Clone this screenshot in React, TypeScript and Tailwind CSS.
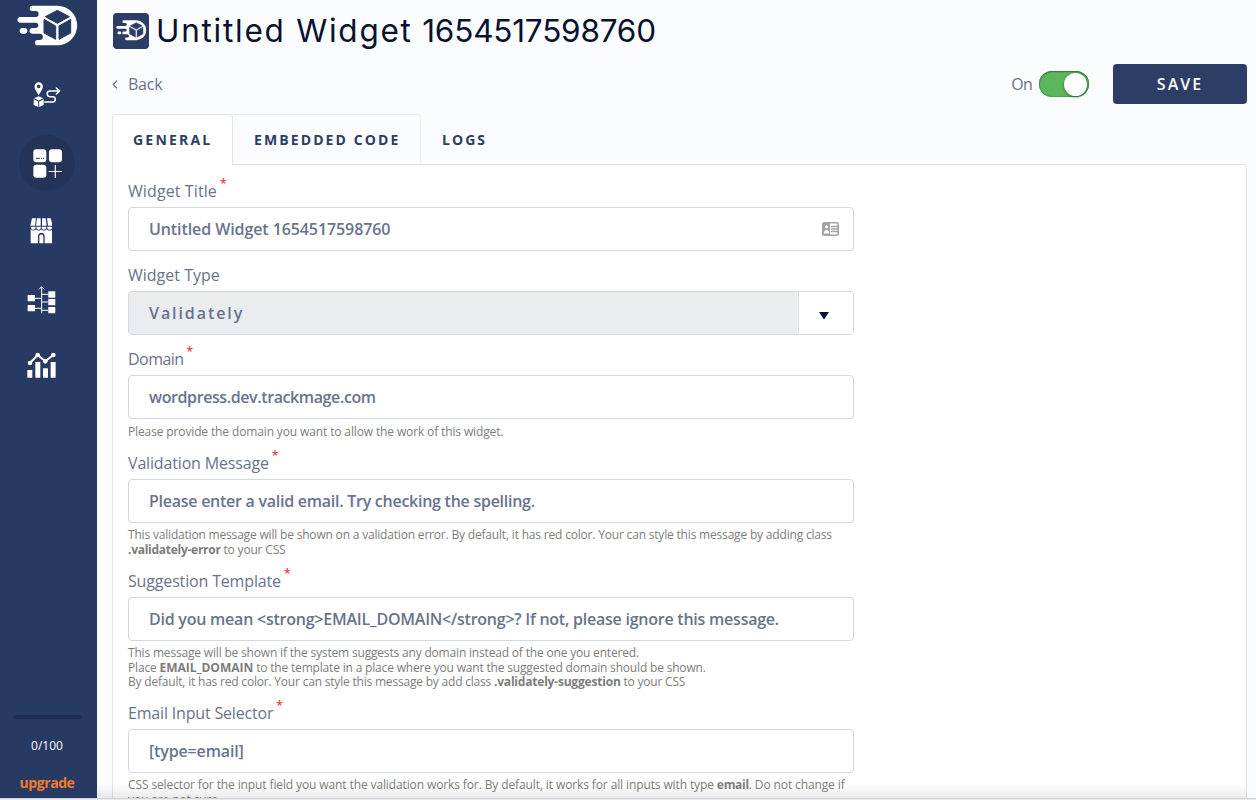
import type { ReactNode } from "react";

function Logo({ className, face }: { className: string; face: string }) {
  return (
    <svg viewBox="20 15 182 123" className={className} fill="#fff">
      <path d="M66 17H141a59.5 59.5 0 0 1 0 119H82a8 8 0 0 1 0-16h6a9.500 9.500 0 0 0 0-19H66a8.500 8.500 0 0 1 0-17h10a8 8 0 0 0 0-16H30a8.500 8.500 0 0 1 0-17h46a9 9 0 0 0 0-18H66a8 8 0 0 1 0-16z" />
      <rect x="28" y="84" width="23" height="17" rx="8.500" />
      <g fill={face} stroke={face} strokeWidth="3" strokeLinejoin="round">
        <path d="M141 31l36 19-36 20-36-20z" />
        <path d="M101 58l35 20v40l-35-19z" />
        <path d="M181 58l-35 20v40l35-19z" />
      </g>
    </svg>
  );
}

function RouteIcon() {
  return (
    <svg viewBox="70 247 84 76" className="h-[25.3px] w-[28px]" fill="#fff">
      <path fillRule="evenodd" d="M87 248c7 0 12.500 5.500 12.500 12.500C99.500 270 92 277 87 287c-5-10-12.500-17-12.500-26.500C74.500 253.500 80 248 87 248zm0 7a5.500 5.500 0 1 0 0 11 5.500 5.500 0 0 0 0-11z" />
      <path d="M87 290l14 6-14 6.500-14-6.500zM72 299l13.500 6.500V322L72 316zM102 299l-13.500 6.500V322L102 316z" />
      <path d="M105 307h24a8 8 0 0 0 0-16h-8a8.500 8.500 0 0 1 0-17h27M140 265l10 9-10 9" fill="none" stroke="#fff" strokeWidth="4.500" strokeLinejoin="round" strokeLinecap="round" />
    </svg>
  );
}

function WidgetsIcon() {
  return (
    <svg viewBox="98 71 88 88" className="ml-px mt-px size-[29.3px]" fill="#fff">
      <rect x="99" y="72" width="39" height="39" rx="9" />
      <rect x="146" y="72" width="39" height="39" rx="9" />
      <rect x="99" y="118" width="39" height="39" rx="9" />
      <path d="M165 120v37M146.500 138.500h37" stroke="#fff" strokeWidth="3.500" strokeLinecap="round" />
      <path d="M107 99h12M122 99h3M128 99h3" stroke="#253358" strokeWidth="3" />
    </svg>
  );
}

function StoreIcon() {
  return (
    <svg viewBox="90 280 68 77" className="h-[25.7px] w-[22.7px]" fill="#fff">
      <path d="M96 281h12l-3 22H91zM111 281h11v22h-14zM126 281h11l3 22h-14zM141 281h11l6 22h-14z" />
      <path d="M92 306h15c0 6-3 9-7 9s-8-3-8-9zM109 306h14c0 6-3 9-7 9s-7-3-7-9zM125 306h14c0 6-3 9-7 9s-7-3-7-9zM141 306h16c0 6-4 9-8 9s-8-3-8-9z" />
      <path d="M92 314c5 5 12 5 16 0 4 5 12 5 16 0 4 5 12 5 16 0 4 5 12 5 17 0v42h-23v-21c0-14-20-14-20 0v21H92z" />
      <path d="M118 356v-20c0-9 12-9 12 0v20z" />
    </svg>
  );
}

function TreeIcon() {
  return (
    <svg viewBox="80 61 88 84" className="ml-[2px] mt-px h-[28px] w-[29.3px]" fill="#fff">
      <path d="M124 143V64M116 71l8-8 8 8M103 98h21M103 128h21M124 86h20M124 109h20M124 134h20" fill="none" stroke="#fff" strokeWidth="3" />
      <rect x="82" y="88" width="22" height="19" rx="1" />
      <rect x="82" y="118" width="22" height="19" rx="1" />
      <rect x="144" y="77" width="21" height="19" rx="1" />
      <rect x="144" y="100" width="21" height="19" rx="1" />
      <rect x="144" y="124" width="21" height="19" rx="1" />
    </svg>
  );
}

function ChartIcon() {
  return (
    <svg viewBox="80 262 88 79" className="mb-[3px] ml-[1px] h-[26.3px] w-[29.3px]" fill="#fff">
      <path d="M89 295l23-24 23 19 24-19" fill="none" stroke="#fff" strokeWidth="6" />
      <circle cx="89" cy="295" r="7" />
      <circle cx="112" cy="271" r="7" />
      <circle cx="135" cy="290" r="7" />
      <circle cx="159" cy="271" r="7" />
      <rect x="81" y="316" width="15" height="23" rx="1" />
      <rect x="105" y="292" width="15" height="47" rx="1" />
      <rect x="128" y="311" width="15" height="28" rx="1" />
      <rect x="151" y="292" width="15" height="47" rx="1" />
    </svg>
  );
}

function NavItem({ children, active, inset }: { children: ReactNode; active?: boolean; inset?: string }) {
  return (
    <div className={`flex h-[68px] items-center justify-center ${inset ?? "w-[94px]"}`}>
      <div className={`flex size-14 items-center justify-center rounded-full ${active ? "bg-[#253358]" : ""}`}>{children}</div>
    </div>
  );
}

function Sidebar() {
  return (
    <aside className="flex h-[798px] w-[97px] shrink-0 flex-col bg-[#273a63]">
      <div className="h-[61px] pt-[5px] pl-[17px]">
        <Logo className="h-[41px] w-[60.7px]" face="#273a63" />
      </div>
      <NavItem><RouteIcon /></NavItem>
      <NavItem active><WidgetsIcon /></NavItem>
      <NavItem inset="w-[82px]"><StoreIcon /></NavItem>
      <NavItem inset="w-[82px]"><TreeIcon /></NavItem>
      <NavItem inset="w-[82px]"><ChartIcon /></NavItem>
      <div className="mt-auto flex w-[94px] flex-col items-center pb-[5px]">
        <div className="h-1 w-[68px] rounded-full bg-[#1e2b56]" />
        <span className="mt-[18px] text-[12px] leading-[18px] font-medium text-white">0/100</span>
        <span className="mt-[18px] text-[14px] leading-[20px] font-bold tracking-[-0.45px] text-[#f47a2c]">upgrade</span>
      </div>
    </aside>
  );
}

function Label({ children, required, tracking }: { children: string; required?: boolean; tracking: string }) {
  return (
    <div className="flex h-7 items-start text-[16px] leading-6 text-[#68738c]">
      <span className={tracking}>{children}</span>
      {required && <span className="ml-[3px] -mt-[7px] text-[12px] font-semibold text-[#e8403c]">*</span>}
    </div>
  );
}

function Input({ value, tracking, children }: { value: string; tracking: string; children?: ReactNode }) {
  return (
    <div className="flex h-11 items-center justify-between rounded-[4px] border border-[#d0d7e1] bg-white pr-[14px] pl-[20px] text-[16px] font-semibold whitespace-nowrap text-[#68738c]">
      <span className={tracking}>{value}</span>
      {children}
    </div>
  );
}

function Helper({ children, className }: { children: ReactNode; className: string }) {
  return <div className={`pt-[5px] text-[12px] leading-[14.5px] whitespace-nowrap text-[#7c7c7c] ${className}`}>{children}</div>;
}

function CardIcon() {
  return (
    <svg viewBox="0 0 17 14" className="h-[14px] w-[17px]">
      <rect x="0.800" y="0.800" width="15.400" height="12.400" rx="1.500" fill="#fff" stroke="#a3a3a3" strokeWidth="1.600" />
      <path d="M1 1h7v12H1z" fill="#a3a3a3" />
      <circle cx="4.500" cy="4.800" r="1.600" fill="#fff" />
      <path d="M2 11.500V9.500l1.500-1.500h2L7 9.500v2z" fill="#fff" />
      <path d="M9 4.500h7M9 7h7M9 9.500h7" stroke="#a3a3a3" strokeWidth="1.300" />
    </svg>
  );
}

export default function App() {
  return (
    <div className="relative h-[800px] w-[1256px] overflow-hidden bg-[#fbfcff] font-['Open_Sans','Noto_Sans',sans-serif]">
      <div className="flex h-[798px] overflow-hidden">
        <Sidebar />
        <main className="flex min-w-0 flex-1 flex-col pr-[9px] pl-[15px]">
          <div className="flex h-[61px] items-center gap-[7px] pl-px">
            <div className="flex size-9 items-center justify-center rounded-[4px] bg-[#2d3e66]">
              <Logo className="h-[20.5px] w-[30.5px]" face="#2d3e66" />
            </div>
            <h1 className="font-['Inter',sans-serif] text-[31.5px] leading-[40px] tracking-[1.75px] whitespace-nowrap text-[#07122f]">
              Untitled Widget <span className="-ml-[1px] tracking-[-0.2px]">1654517598760</span>
            </h1>
          </div>
          <div className="flex h-[53px] items-start pt-[3px] text-[16px] text-[#68738c]">
            <div className="flex h-10 items-center">
              <svg viewBox="0 0 6 9" className="h-[9px] w-[6px]"><path d="M5 .8L1.200 4.500 5 8.200" fill="none" stroke="#68738c" strokeWidth="1.200" /></svg>
              <span className="ml-[10px] tracking-[-0.25px]">Back</span>
            </div>
            <div className="ml-auto flex h-10 items-center">
              <span className="tracking-[-0.8px]">On</span>
              <div className="ml-[7px] flex h-[26px] w-[50px] items-center justify-end rounded-full bg-[#5cb75c] pr-[2px] shadow-[inset_0_1px_2px_rgba(0,60,0,0.4),inset_0_0_0_1px_#4ea44f]">
                <div className="size-[23px] rounded-full bg-white shadow-[0_1px_3px_rgba(0,0,0,0.45)]" />
              </div>
              <button className="ml-6 h-10 w-[134px] rounded-[4px] bg-[#2d3e66] text-[16px] font-semibold tracking-[2px] text-white">SAVE</button>
            </div>
          </div>
          <div className="flex h-[50px] text-[14px] leading-[49px] font-bold text-[#2d3e66]">
            <div className="z-10 h-[51px] w-[121px] rounded-t-[4px] border border-b-0 border-[#e1e5eb] bg-white pl-[20px] tracking-[2.2px]">GENERAL</div>
            <div className="h-[50px] w-[188px] rounded-tr-[4px] border-t border-r border-[#eaedf3] pl-[21px] tracking-[2.1px]">EMBEDDED CODE</div>
            <div className="pt-px pl-[21px] tracking-[2.05px]">LOGS</div>
          </div>
          <section className="min-h-0 flex-1 rounded-tr-[4px] border border-b-0 border-[#e1e5eb] bg-white pt-[14px] pl-[15px]">
            <div className="flex w-[725.5px] flex-col">
              <Label required tracking="tracking-[0.1px]">Widget Title</Label>
              <Input value="Untitled Widget 1654517598760" tracking="tracking-[-0.09px]"><CardIcon /></Input>
              <div className="h-3" />
              <Label tracking="tracking-[0px]">Widget Type</Label>
              <div className="flex h-11 overflow-hidden rounded-[4px] border border-[#d0d7e1] text-[16px] leading-[42px] font-semibold text-[#68738c]">
                <div className="flex-1 bg-[#ebecf0] pl-[20px] tracking-[1.92px]">Validately</div>
                <div className="flex w-[55px] items-center border-l border-[#d9dde5] bg-white pt-[5px] pl-[20px] shadow-[-1px_0_0_#f6f7f9]">
                  <svg viewBox="0 0 10 8" className="h-[8px] w-[10px]"><path d="M0 0h10L5 7.500z" fill="#07163c" /></svg>
                </div>
              </div>
              <div className="h-3" />
              <Label required tracking="tracking-[-0.55px]">Domain</Label>
              <Input value="wordpress.dev.trackmage.com" tracking="tracking-[-0.4px]" />
              <Helper className="h-8 pt-[6px] tracking-[-0.13px]">Please provide the domain you want to allow the work of this widget.</Helper>
              <Label required tracking="tracking-[-0.16px]">Validation Message</Label>
              <Input value="Please enter a valid email. Try checking the spelling." tracking="tracking-[-0.26px]" />
              <Helper className="h-[46px] tracking-[-0.186px]">
                This validation message will be shown on a validation error. By default, it has red color. Your can style this message by adding class<br />
                <b className="tracking-[-0.27px]">.validately-error</b> to your CSS
              </Helper>
              <Label required tracking="tracking-[-0.16px]">Suggestion Template</Label>
              <Input value="Did you mean <strong>EMAIL_DOMAIN</strong>? If not, please ignore this message." tracking="tracking-[-0.235px]" />
              <Helper className="h-[60px] tracking-[-0.18px]">
                This message will be shown if the system suggests any domain instead of the one you entered.<br />
                Place <b className="tracking-[0px]">EMAIL_DOMAIN</b> to the template in a place where you want the suggested domain should be shown.<br />
                <span className="tracking-[-0.2px]">By default, it has red color. Your can style this message by add class <b>.validately-suggestion</b> to your CSS</span>
              </Helper>
              <Label required tracking="tracking-[-0.18px]">Email Input Selector</Label>
              <Input value="[type=email]" tracking="tracking-[-0.15px]" />
              <Helper className="h-[46px] tracking-[-0.115px]">
                CSS selector for the input field you want the validation works for. By default, it works for all inputs with type <b className="tracking-[-0.3px]">email</b>. Do not change if<br />
                you are not sure.
              </Helper>
            </div>
          </section>
        </main>
      </div>
      <div className="h-[2px] border-t border-[#cfd0d4] bg-[#ececef]" />
      <div className="pointer-events-none absolute bottom-[2px] left-[97px] h-[14px] w-[1150px] bg-gradient-to-b from-black/0 to-black/8" />
    </div>
  );
}
